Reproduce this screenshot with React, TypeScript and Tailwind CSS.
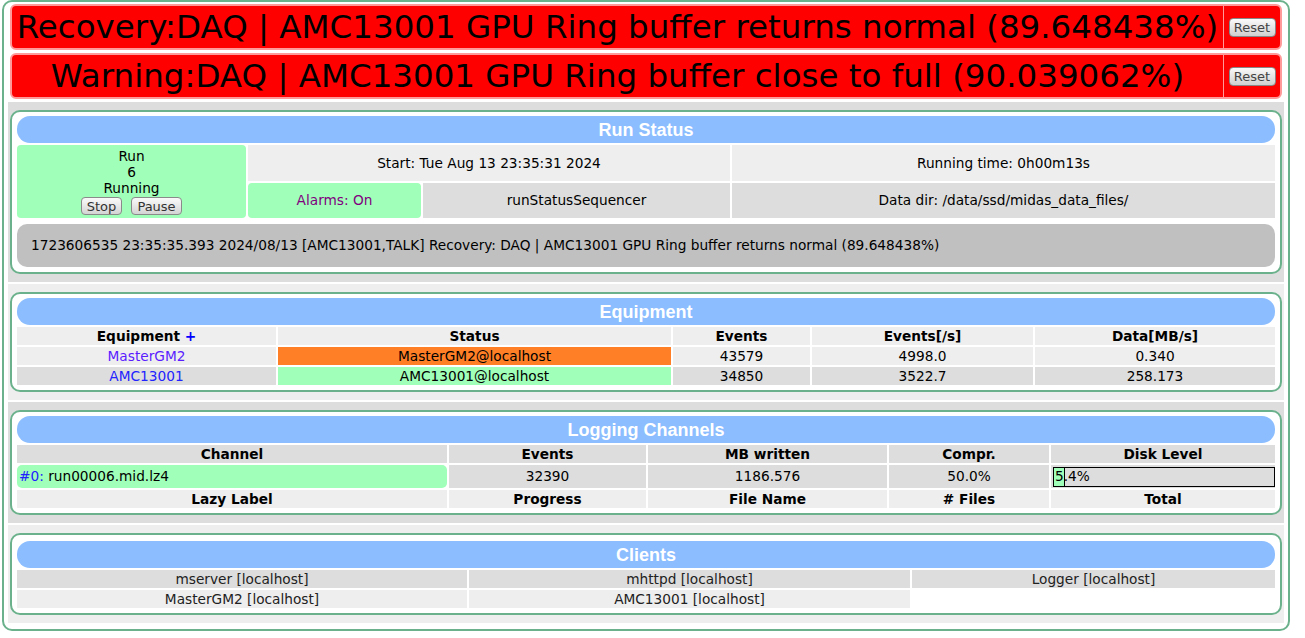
import React from "react";

const green = "bg-[#a0ffb8]";

function Btn({ label, w }: { label: string; w: string }) {
  return (
    <button
      className={`${w} h-[18px] rounded-[4px] border border-[#8a8a8a] bg-gradient-to-b from-[#fafafa] to-[#d4d4d4] text-[13px] leading-none text-[#333]`}
    >
      {label}
    </button>
  );
}

function Banner({ text }: { text: string }) {
  return (
    <div className="mx-[2px] flex h-[46px] rounded-[6px] border-2 border-[#ff9a9a] bg-[#ff0000]">
      <div className="flex flex-1 items-center justify-center whitespace-nowrap pt-[1px] text-[32.5px] leading-none text-black">
        {text}
      </div>
      <div className="w-px bg-[#ff9a9a]" />
      <div className="flex w-[56px] items-center justify-center">
        <button className="h-[19px] w-[47px] rounded-[4px] border border-[#888] bg-gradient-to-b from-[#fafafa] to-[#d0d0d0] text-[13px] leading-none text-[#444]">
          Reset
        </button>
      </div>
    </div>
  );
}

function Section({
  bg,
  title,
  top = "pt-[4px]",
  children,
}: {
  bg: string;
  title: string;
  top?: string;
  children: React.ReactNode;
}) {
  return (
    <div className={`${bg} px-[2px] py-[8px]`}>
      <div className={`rounded-[10px] border-2 border-[#6bb28c] bg-white px-[5px] pb-[5px] ${top}`}>
        <div className="flex h-[27px] items-center justify-center rounded-[13px] bg-[#8bbdff] pt-[1px] font-['Liberation_Sans',Arial,sans-serif] text-[18px] font-bold text-white">
          {title}
        </div>
        <div className="mt-[2px]">{children}</div>
      </div>
    </div>
  );
}

export default function App() {
  const c = "flex items-center justify-center whitespace-nowrap";
  return (
    <div className="bg-white font-['DejaVu_Sans',Verdana,sans-serif] text-[13.7px] text-black">
      <div className="ml-[2px] w-[1288px] rounded-[10px] border-2 border-[#6bb28c] bg-white px-[4px] pb-[6px] pt-[2px]">
        <Banner text="Recovery:DAQ | AMC13001 GPU Ring buffer returns normal (89.648438%)" />
        <div className="h-[3px]" />
        <Banner text="Warning:DAQ | AMC13001 GPU Ring buffer close to full (90.039062%)" />
        <div className="flex flex-col gap-[2px] pt-[3px]">
          {/* run status */}
          <Section bg="bg-[#dddddd]" title="Run Status">
            <div className="grid grid-cols-[229px_173px_307px_1fr] grid-rows-[36px_35px] gap-[2px]">
              <div className={`row-span-2 flex flex-col items-center justify-center rounded-[4px] ${green} leading-[16px]`}>
                <div>Run</div>
                <div>6</div>
                <div>Running</div>
                <div className="mt-[1px] flex gap-[9px]">
                  <Btn label="Stop" w="w-[41px]" />
                  <Btn label="Pause" w="w-[51px]" />
                </div>
              </div>
              <div className={`col-span-2 bg-[#eeeeee] ${c}`}>Start: Tue Aug 13 23:35:31 2024</div>
              <div className={`bg-[#eeeeee] ${c}`}>Running time: 0h00m13s</div>
              <div className={`rounded-[4px] ${green} text-[#800080] ${c}`}>Alarms: On</div>
              <div className={`bg-[#dddddd] ${c}`}>runStatusSequencer</div>
              <div className={`bg-[#dddddd] ${c}`}>Data dir: /data/ssd/midas_data_files/</div>
            </div>
            <div className="mt-[6px] flex h-[43px] items-center rounded-[10px] bg-[#c0c0c0] pl-[14px]">
              1723606535 23:35:35.393 2024/08/13 [AMC13001,TALK] Recovery: DAQ | AMC13001 GPU Ring buffer returns normal (89.648438%)
            </div>
          </Section>

          {/* equipment */}
          <Section bg="bg-[#eeeeee]" title="Equipment">
            <div className="grid grid-cols-[259px_393px_137px_221px_1fr] auto-rows-[18px] gap-[2px]">
              <div className={`bg-[#eeeeee] font-bold ${c}`}>
                Equipment&nbsp;<span className="text-[#0000ff]">+</span>
              </div>
              <div className={`bg-[#eeeeee] font-bold ${c}`}>Status</div>
              <div className={`bg-[#eeeeee] font-bold ${c}`}>Events</div>
              <div className={`bg-[#eeeeee] font-bold ${c}`}>Events[/s]</div>
              <div className={`bg-[#eeeeee] font-bold ${c}`}>Data[MB/s]</div>

              <div className={`bg-[#eeeeee] text-[#5a1cff] ${c}`}>MasterGM2</div>
              <div className={`bg-[#ff7f26] ${c}`}>MasterGM2@localhost</div>
              <div className={`bg-[#eeeeee] ${c}`}>43579</div>
              <div className={`bg-[#eeeeee] ${c}`}>4998.0</div>
              <div className={`bg-[#eeeeee] ${c}`}>0.340</div>

              <div className={`bg-[#dddddd] text-[#2222ff] ${c}`}>AMC13001</div>
              <div className={`${green} ${c}`}>AMC13001@localhost</div>
              <div className={`bg-[#dddddd] ${c}`}>34850</div>
              <div className={`bg-[#dddddd] ${c}`}>3522.7</div>
              <div className={`bg-[#dddddd] ${c}`}>258.173</div>
            </div>
          </Section>

          {/* logging channels */}
          <Section bg="bg-[#dddddd]" title="Logging Channels">
            <div className="grid grid-cols-[430px_197px_239px_160px_1fr] grid-rows-[18px_23px_18px] gap-[2px]">
              <div className={`bg-[#dddddd] font-bold ${c}`}>Channel</div>
              <div className={`bg-[#dddddd] font-bold ${c}`}>Events</div>
              <div className={`bg-[#dddddd] font-bold ${c}`}>MB written</div>
              <div className={`bg-[#dddddd] font-bold ${c}`}>Compr.</div>
              <div className={`bg-[#dddddd] font-bold ${c}`}>Disk Level</div>

              <div className={`flex items-center rounded-[5px] ${green} pl-[2px]`}>
                <span className="text-[#2222ff]">#0:</span>&nbsp;run00006.mid.lz4
              </div>
              <div className={`bg-[#dddddd] ${c}`}>32390</div>
              <div className={`bg-[#dddddd] ${c}`}>1186.576</div>
              <div className={`bg-[#dddddd] ${c}`}>50.0%</div>
              <div className="flex items-center bg-[#dddddd] pl-[2px]">
                <div className="relative flex h-[20px] flex-1 items-center border border-black">
                  <div className={`absolute bottom-0 left-0 top-0 w-[11px] ${green} border-r border-black`} />
                  <span className="relative pl-[1px]">5.4%</span>
                </div>
              </div>

              <div className={`bg-[#eeeeee] font-bold ${c}`}>Lazy Label</div>
              <div className={`bg-[#eeeeee] font-bold ${c}`}>Progress</div>
              <div className={`bg-[#eeeeee] font-bold ${c}`}>File Name</div>
              <div className={`bg-[#eeeeee] font-bold ${c}`}># Files</div>
              <div className={`bg-[#eeeeee] font-bold ${c}`}>Total</div>
            </div>
          </Section>

          {/* clients */}
          <Section bg="bg-[#eeeeee]" title="Clients" top="pt-[6px]">
            <div className="grid grid-cols-[450px_441px_1fr] auto-rows-[18px] gap-[2px] text-[#222]">
              <div className={`bg-[#dddddd] ${c}`}>mserver [localhost]</div>
              <div className={`bg-[#dddddd] ${c}`}>mhttpd [localhost]</div>
              <div className={`bg-[#dddddd] ${c}`}>Logger [localhost]</div>
              <div className={`bg-[#eeeeee] ${c}`}>MasterGM2 [localhost]</div>
              <div className={`bg-[#eeeeee] ${c}`}>AMC13001 [localhost]</div>
              <div />
            </div>
          </Section>
        </div>
      </div>
    </div>
  );
}
